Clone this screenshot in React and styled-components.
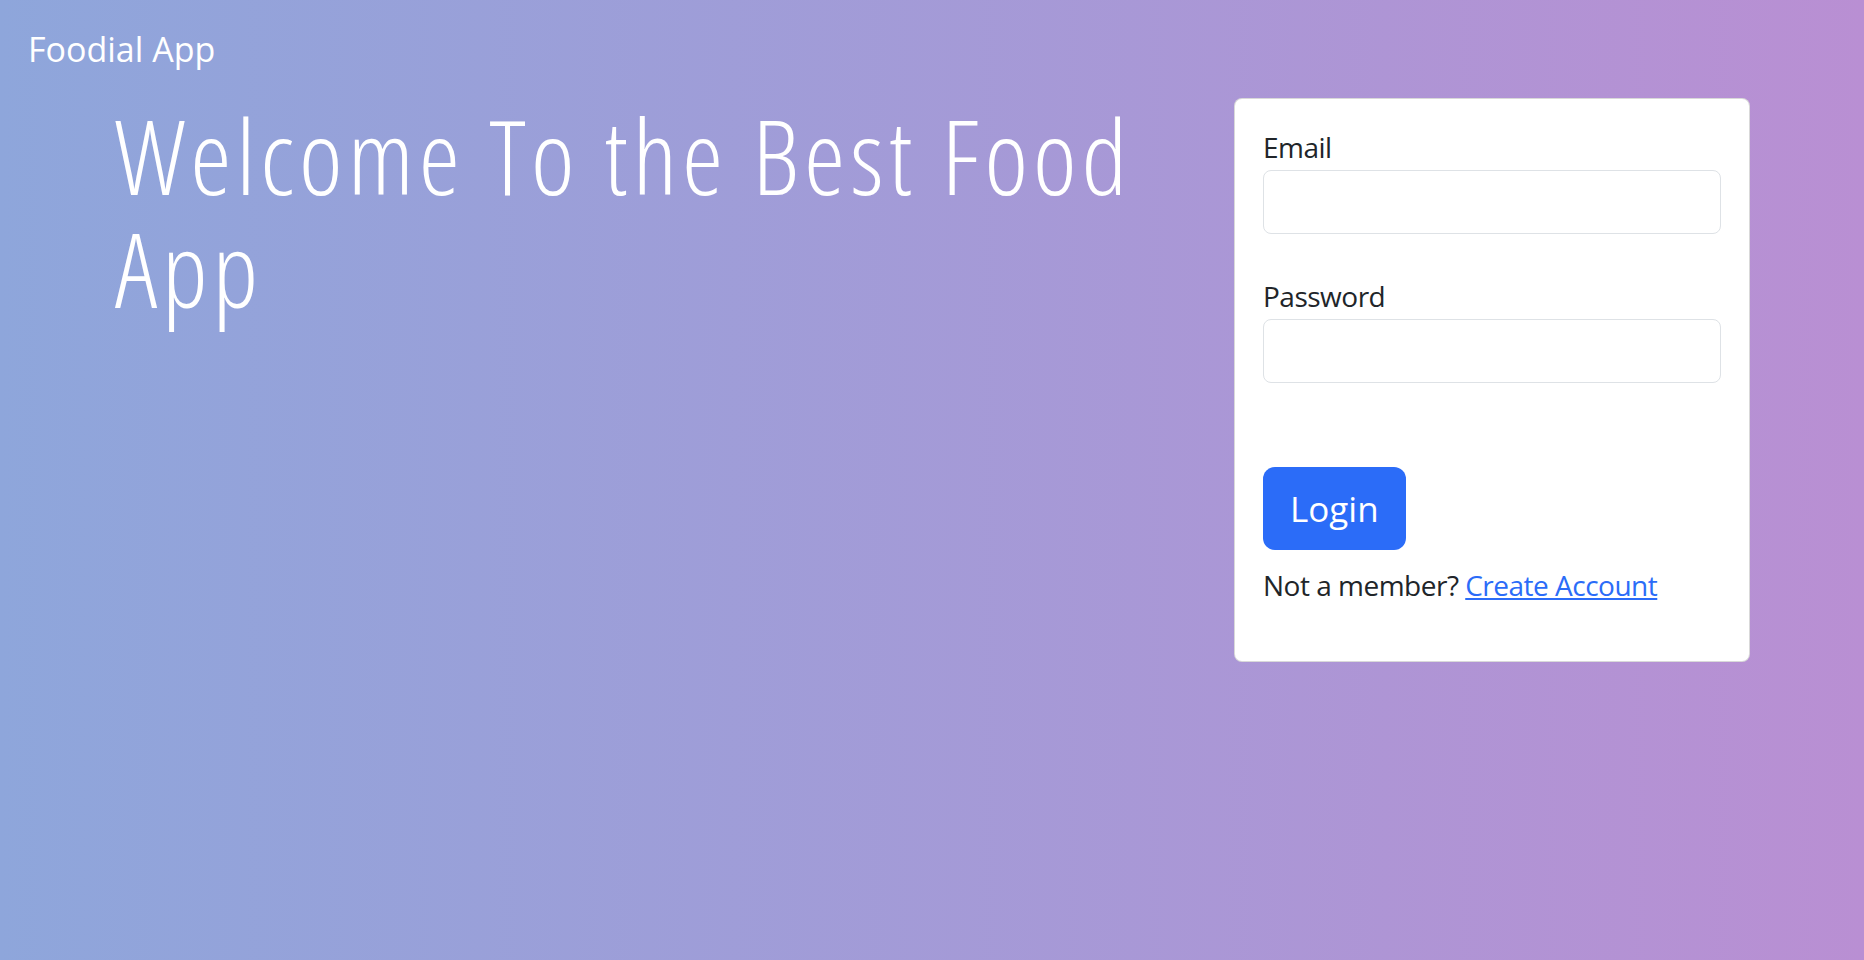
import React from 'react';
import styled, { createGlobalStyle } from 'styled-components';

const GlobalStyle = createGlobalStyle`
  * {
    box-sizing: border-box;
  }
  body {
    margin: 0;
    font-family: "Open Sans", "Noto Sans", sans-serif;
    color: #212529;
  }
`;

const Page = styled.div`
  min-height: 100vh;
  background: linear-gradient(90deg, #8ea6db 0%, #b98fd3 100%);
`;

const Navbar = styled.nav`
  padding: 22px 28px 0;
`;

const Brand = styled.a`
  display: inline-block;
  font-size: 34px;
  line-height: 54px;
  color: #fff;
  text-decoration: none;
`;

const Main = styled.main`
  display: flex;
  align-items: flex-start;
  padding: 22px 0 0 115px;
`;

const Hero = styled.div`
  width: 1119px;
`;

const Title = styled.h1`
  margin: 0;
  width: 1060px;
  font-family: "Open Sans", sans-serif;
  font-size: 104px;
  font-stretch: condensed;
  font-weight: 300;
  letter-spacing: 5px;
  line-height: 113px;
  color: #fff;
`;

const Card = styled.div`
  width: 516px;
  background: #fff;
  border: 1px solid rgba(0, 0, 0, 0.15);
  border-radius: 8px;
  padding: 26px 28px 53px;
`;

const Field = styled.div`
  margin-bottom: ${p => p.gap}px;
`;

const Label = styled.label`
  display: block;
  font-size: 28px;
  line-height: 45px;
  letter-spacing: -0.5px;
`;

const Input = styled.input`
  display: block;
  width: 100%;
  height: 64px;
  border: 1px solid #dee2e6;
  border-radius: 8px;
  padding: 0 18px;
  font-size: 28px;
  font-family: inherit;
  outline: none;
`;

const Button = styled.button`
  display: block;
  height: 83px;
  padding: 0 27px;
  border: 0;
  border-radius: 12px;
  background: #2b6cf8;
  color: #fff;
  font-family: inherit;
  font-size: 35px;
  cursor: pointer;
`;

const Note = styled.p`
  margin: 13px 0 0;
  font-size: 28px;
  line-height: 45px;
  letter-spacing: -0.5px;
`;

const Link = styled.a`
  color: #2b6cf8;
  text-decoration: underline;
`;

export default function App() {
  return (
    <Page>
      <GlobalStyle />
      <Navbar>
        <Brand href="#">Foodial App</Brand>
      </Navbar>
      <Main>
        <Hero>
          <Title>Welcome To the Best Food App</Title>
        </Hero>
        <Card>
          <Field gap={40}>
            <Label htmlFor="email">Email</Label>
            <Input id="email" type="email" />
          </Field>
          <Field gap={84}>
            <Label htmlFor="password">Password</Label>
            <Input id="password" type="password" />
          </Field>
          <Button type="button">Login</Button>
          <Note>
            Not a member? <Link href="#">Create Account</Link>
          </Note>
        </Card>
      </Main>
    </Page>
  );
}
